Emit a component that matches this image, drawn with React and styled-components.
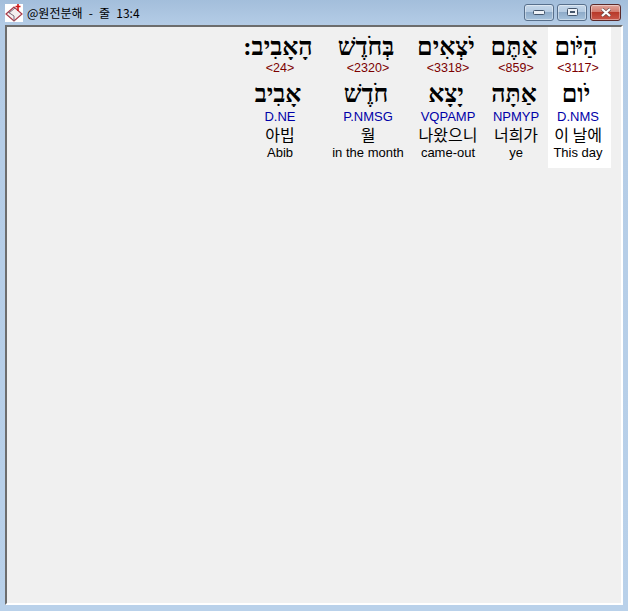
import React from 'react';
import styled, { createGlobalStyle } from 'styled-components';

const GlobalStyle = createGlobalStyle`
  html, body {
    margin: 0;
    padding: 0;
  }
  body {
    width: 628px;
    height: 611px;
    overflow: hidden;
    background: #b9d1ea;
  }
`;

const Window = styled.div`
  width: 628px;
  height: 611px;
  display: flex;
  flex-direction: column;
  background: linear-gradient(180deg, #a3bedb 0, #b4cce6 25px, #b9d1ea 100%);
`;

const TitleBar = styled.div`
  height: 25px;
  flex: none;
  display: flex;
  align-items: center;
  padding: 0 7px 0 5px;
`;

const Title = styled.div`
  margin: -1px 0 0 4px;
  flex: 1;
  font: 12px "Noto Sans CJK KR", "Liberation Sans", sans-serif;
  word-spacing: 3.5px;
  color: #000;
  white-space: pre;
`;

const Controls = styled.div`
  display: flex;
  gap: 3px;
  margin-top: -1px;
`;

const WinButton = styled.div`
  width: ${(p) => (p.$close ? 31 : 30)}px;
  height: 17px;
  box-sizing: border-box;
  border: 1px solid ${(p) => (p.$close ? '#5b2a2a' : '#58708c')};
  border-radius: 3px;
  display: flex;
  align-items: center;
  justify-content: center;
  box-shadow: inset 0 0 0 1px rgba(255, 255, 255, 0.4);
  background: ${(p) =>
    p.$close
      ? 'linear-gradient(180deg, #e0a59c 0, #d37b6e 45%, #b8392a 50%, #c9574a 100%)'
      : 'linear-gradient(180deg, #c6d8ea 0, #b5cbe2 45%, #8eabc9 50%, #a6c2dc 100%)'};
`;

const Client = styled.div`
  flex: 1;
  margin: 0 5px 6px 5px;
  box-sizing: border-box;
  background: #f0f0f0;
  border-top: 2px solid #6d6d6d;
  border-left: 2px solid #6d6d6d;
  border-right: 2px solid #fff;
  border-bottom: 2px solid #fff;
  display: flex;
  flex-direction: row-reverse;
  align-items: flex-start;
  padding-right: 10px;
`;

const Word = styled.div`
  width: ${(p) => p.$w}px;
  height: 141px;
  box-sizing: border-box;
  padding: 3px ${(p) => (p.$active ? 3 : 0)}px 0 0;
  flex: none;
  display: flex;
  flex-direction: column;
  align-items: center;
  background: ${(p) => (p.$active ? '#fff' : 'transparent')};
`;

const Hebrew = styled.div`
  height: 33px;
  margin-right: 4px;
  font: bold 25px/33px "Liberation Serif", "DejaVu Serif", serif;
  color: #000;
  white-space: nowrap;
  direction: rtl;
`;

const Strong = styled.div`
  height: 10px;
  margin-bottom: 4px;
  font: 12.5px/10px "Liberation Sans", sans-serif;
  color: #7c0000;
`;

const Parsing = styled.div`
  height: 13px;
  font: 13px/13px "Liberation Sans", sans-serif;
  color: #0000a8;
`;

const Korean = styled.div`
  height: 20px;
  margin-top: 1px;
  font: 16px/20px "Noto Sans CJK KR", sans-serif;
  color: #000;
  white-space: nowrap;
`;

const Gloss = styled.div`
  height: 14px;
  margin-top: 2px;
  font: 13px/14px "Liberation Sans", sans-serif;
  color: #000;
  white-space: nowrap;
`;

const words = [
  { w: 63, active: true, text: 'הַיֹּום', strong: '<3117>', root: 'יֹום', parse: 'D.NMS', ko: '이 날에', en: 'This day' },
  { w: 64, text: 'אַתֶּם', strong: '<859>', root: 'אַתָּה', parse: 'NPMYP', ko: '너희가', en: 'ye' },
  { w: 72, text: 'יֹצְאִים', strong: '<3318>', root: 'יָצָא', parse: 'VQPAMP', ko: '나왔으니', en: 'came-out' },
  { w: 88, text: 'בְּחֹדֶשׁ', strong: '<2320>', root: 'חֹדֶשׁ', parse: 'P.NMSG', ko: '월', en: 'in the month' },
  { w: 88, text: 'הָאָבִיב:', strong: '<24>', root: 'אָבִיב', parse: 'D.NE', ko: '아빕', en: 'Abib' },
];

const AppIcon = () => (
  <svg width="18" height="18" viewBox="0 0 18 18">
    <rect width="18" height="18" fill="#fff" />
    <path d="M1 10 L9 3 L17 10 L9 17 Z" fill="#f4eeee" stroke="#a83a4a" strokeWidth="1.2" />
    <path d="M4 9 L10 4 M9 17 L9 12 L3 8" fill="none" stroke="#7a6a7a" strokeWidth="1" />
    <path d="M13 0 V7 M10.5 2.5 H15.5" stroke="#d01818" strokeWidth="1.6" />
  </svg>
);

export default function App() {
  return (
    <>
      <GlobalStyle />
      <Window>
        <TitleBar>
          <AppIcon />
          <Title>@원전분해 - 줄 13:4</Title>
          <Controls>
            <WinButton>
              <svg width="12" height="5" viewBox="0 0 12 5">
                <rect x="0.5" y="0.5" width="11" height="4" rx="1" fill="#eef2f7" stroke="#44566c" />
              </svg>
            </WinButton>
            <WinButton>
              <svg width="11" height="8" viewBox="0 0 11 8">
                <rect x="0.5" y="0.5" width="10" height="7" rx="1" fill="#eef2f7" stroke="#44566c" />
                <rect x="3" y="3" width="5" height="2" fill="#44566c" />
              </svg>
            </WinButton>
            <WinButton $close>
              <svg width="12" height="9" viewBox="0 0 12 9">
                <path d="M2 1 L10 8 M10 1 L2 8" stroke="#6a4a4a" strokeWidth="3.4" />
                <path d="M2 1 L10 8 M10 1 L2 8" stroke="#fff" strokeWidth="2.2" />
              </svg>
            </WinButton>
          </Controls>
        </TitleBar>
        <Client>
          {words.map((item) => (
            <Word key={item.strong} $w={item.w} $active={item.active}>
              <Hebrew>{item.text}</Hebrew>
              <Strong>{item.strong}</Strong>
              <Hebrew>{item.root}</Hebrew>
              <Parsing>{item.parse}</Parsing>
              <Korean>{item.ko}</Korean>
              <Gloss>{item.en}</Gloss>
            </Word>
          ))}
        </Client>
      </Window>
    </>
  );
}
